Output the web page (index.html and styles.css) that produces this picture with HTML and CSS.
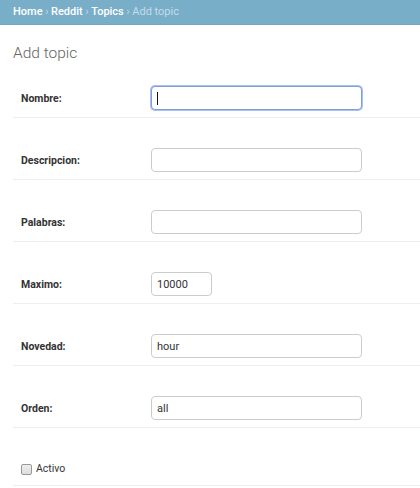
FILE: index.html
```html
<!DOCTYPE html>
<html lang="es">
<head>
<meta charset="utf-8">
<title>Add topic</title>
<link rel="stylesheet" href="styles.css">
</head>
<body>
<div class="breadcrumbs">
  <a href="#">Home</a> <span class="sep">›</span> <a href="#">Reddit</a> <span class="sep">›</span> <a href="#">Topics</a> <span class="sep">›</span> Add topic
</div>
<div class="content">
  <h1>Add topic</h1>
  <form>
    <div class="form-row first">
      <label class="lbl">Nombre:</label>
      <div class="field">
        <input class="inp wide focused" type="text" value="">
        <span class="caret"></span>
      </div>
    </div>
    <div class="form-row">
      <label class="lbl">Descripcion:</label>
      <div class="field"><input class="inp wide" type="text" value=""></div>
    </div>
    <div class="form-row">
      <label class="lbl">Palabras:</label>
      <div class="field"><input class="inp wide" type="text" value=""></div>
    </div>
    <div class="form-row">
      <label class="lbl">Maximo:</label>
      <div class="field"><input class="inp narrow" type="text" value="10000"></div>
    </div>
    <div class="form-row">
      <label class="lbl">Novedad:</label>
      <div class="field"><input class="inp wide" type="text" value="hour"></div>
    </div>
    <div class="form-row">
      <label class="lbl">Orden:</label>
      <div class="field"><input class="inp wide" type="text" value="all"></div>
    </div>
    <div class="form-row check-row">
      <span class="checkbox"></span>
      <span class="check-label">Activo</span>
    </div>
  </form>
</div>
</body>
</html>
```
FILE: styles.css
```css
html, body {
  margin: 0;
  padding: 0;
  background: #fff;
  font-family: Roboto, "Liberation Sans", Arial, sans-serif;
  color: #333;
  overflow: hidden;
}
.breadcrumbs {
  background: #79aec8;
  height: 25px;
  box-sizing: border-box;
  padding: 0 13px;
  line-height: 24px;
  font-size: 11px;
  color: #c4dce8;
  border-bottom: 1px solid #73a6bf;
  white-space: nowrap;
}
.breadcrumbs a {
  color: #fff;
  font-weight: 500;
  text-decoration: none;
}
.breadcrumbs .sep {
  font-size: 10px;
}
.content {
  padding-left: 13px;
}
h1 {
  margin: 0;
  font-size: 15.5px;
  line-height: 24px;
  font-weight: 300;
  color: #666;
  height: 31px;
  padding-top: 16px;
  box-sizing: content-box;
}
.form-row {
  display: flex;
  align-items: center;
  padding: 30px 0 7px 8px;
  border-bottom: 1px solid #eee;
}
.form-row.first {
  padding-top: 14px;
}
.lbl {
  width: 130px;
  flex: none;
  font-size: 10.5px;
  font-weight: 700;
  color: #333;
}
.field {
  position: relative;
  display: flex;
}
.inp {
  box-sizing: border-box;
  height: 24px;
  margin: 0;
  padding: 2px 5px;
  border: 1px solid #ccc;
  border-radius: 4px;
  font-family: Roboto, "Liberation Sans", Arial, sans-serif;
  font-size: 11px;
  color: #333;
  background: #fff;
  outline: none;
}
.inp.wide { width: 211px; }
.inp.narrow { width: 61px; }
.inp.focused {
  border-color: #7a9fdd;
  box-shadow: 0 0 0 1px #a9c1ec;
}
.caret {
  position: absolute;
  left: 6px;
  top: 6px;
  width: 1px;
  height: 13px;
  background: #111;
}
.check-row {
  padding-top: 33px;
  padding-bottom: 8px;
}
.checkbox {
  width: 9px;
  height: 9px;
  border: 1px solid #999;
  border-radius: 2px;
  background: linear-gradient(#eee, #ddd);
  flex: none;
  margin-right: 4px;
}
.check-label {
  font-size: 10.5px;
  color: #333;
  line-height: 16px;
}
```
